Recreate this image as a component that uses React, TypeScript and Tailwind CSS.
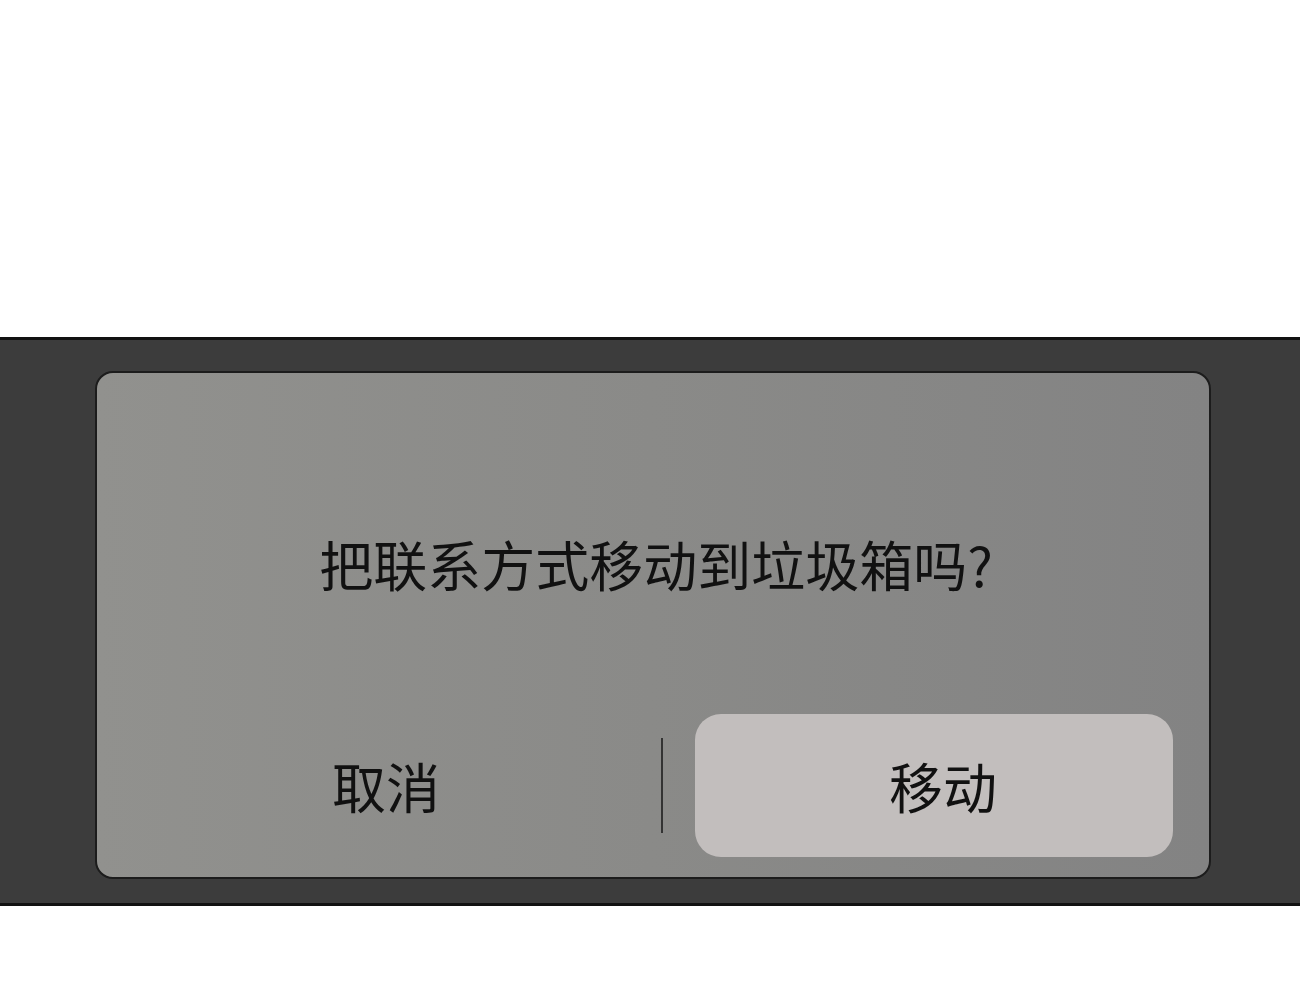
import React from "react";

export default function App() {
  const font = { fontFamily: '"Noto Sans CJK SC", "Noto Sans", sans-serif' };
  return (
    <div className="w-[1300px] h-[991px] bg-white flex flex-col" style={font}>
      <div className="h-[337px] shrink-0 bg-white" />
      <div className="h-[569px] shrink-0 border-y-[3px] border-[#111] bg-[#3c3c3c] pt-[31px] pl-[95px] pr-[89px]">
        <div className="h-[508px] rounded-[18px] border-2 border-[#1c1c1c] bg-gradient-to-r from-[#91918e] via-[#8a8a88] to-[#838383] flex flex-col">
          <div className="h-[164px] shrink-0" />
          <div className="h-[54px] shrink-0 flex justify-center items-center text-[54px] leading-none text-[#111] pl-[6px]">
            把联系方式移动到垃圾箱吗?
          </div>
          <div className="h-[123px] shrink-0" />
          <div className="flex items-center h-[143px] pr-[36px]">
            <div className="flex-1 flex justify-center pl-[14px] text-[54px] leading-none text-[#111]">
              取消
            </div>
            <div className="w-[2px] h-[95px] bg-[#333] mr-[32px]" />
            <div className="w-[478px] h-[143px] rounded-[26px] bg-[#c2bebd] flex items-center justify-center pl-[18px] text-[54px] leading-none text-[#111]">
              移动
            </div>
          </div>
        </div>
      </div>
      <div className="flex-1 bg-white" />
    </div>
  );
}
